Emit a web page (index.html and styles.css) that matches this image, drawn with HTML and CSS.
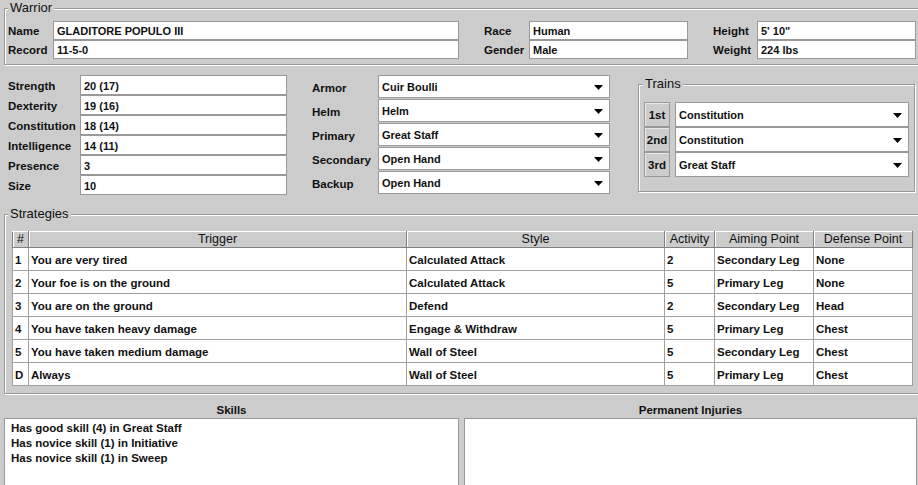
FILE: index.html
```html
<!DOCTYPE html>
<html>
<head>
<meta charset="utf-8">
<title>Warrior</title>
<link rel="stylesheet" href="styles.css">
</head>
<body>
<div class="page">
  <fieldset class="group warrior">
    <legend>Warrior</legend>
    <div class="wgrid">
      <span class="lbl">Name</span><div class="field">GLADITORE POPULO III</div>
      <span class="lbl gap">Race</span><div class="field">Human</div>
      <span class="lbl gap">Height</span><div class="field">5' 10"</div>
      <span class="lbl">Record</span><div class="field">11-5-0</div>
      <span class="lbl gap">Gender</span><div class="field">Male</div>
      <span class="lbl gap">Weight</span><div class="field">224 lbs</div>
    </div>
  </fieldset>

  <div class="mid">
    <div class="attrs">
      <span class="lbl">Strength</span><div class="field tall">20 (17)</div>
      <span class="lbl">Dexterity</span><div class="field tall">19 (16)</div>
      <span class="lbl">Constitution</span><div class="field tall">18 (14)</div>
      <span class="lbl">Intelligence</span><div class="field tall">14 (11)</div>
      <span class="lbl">Presence</span><div class="field tall">3</div>
      <span class="lbl">Size</span><div class="field tall">10</div>
    </div>

    <div class="equip">
      <span class="lbl elbl">Armor</span>
      <div class="combo"><span>Cuir Boulli</span><svg viewBox="0 0 9 5"><path d="M0 0H9L4.5 5Z"/></svg></div>
      <span class="lbl elbl">Helm</span>
      <div class="combo"><span>Helm</span><svg viewBox="0 0 9 5"><path d="M0 0H9L4.5 5Z"/></svg></div>
      <span class="lbl elbl">Primary</span>
      <div class="combo"><span>Great Staff</span><svg viewBox="0 0 9 5"><path d="M0 0H9L4.5 5Z"/></svg></div>
      <span class="lbl elbl">Secondary</span>
      <div class="combo"><span>Open Hand</span><svg viewBox="0 0 9 5"><path d="M0 0H9L4.5 5Z"/></svg></div>
      <span class="lbl elbl">Backup</span>
      <div class="combo"><span>Open Hand</span><svg viewBox="0 0 9 5"><path d="M0 0H9L4.5 5Z"/></svg></div>
    </div>

    <fieldset class="group trains">
      <legend>Trains</legend>
      <div class="tgrid">
        <div class="tbtn">1st</div>
        <div class="combo"><span>Constitution</span><svg viewBox="0 0 9 5"><path d="M0 0H9L4.5 5Z"/></svg></div>
        <div class="tbtn">2nd</div>
        <div class="combo"><span>Constitution</span><svg viewBox="0 0 9 5"><path d="M0 0H9L4.5 5Z"/></svg></div>
        <div class="tbtn">3rd</div>
        <div class="combo"><span>Great Staff</span><svg viewBox="0 0 9 5"><path d="M0 0H9L4.5 5Z"/></svg></div>
      </div>
    </fieldset>
  </div>

  <fieldset class="group strategies">
    <legend>Strategies</legend>
    <table class="strat">
      <colgroup>
        <col class="c-num"><col class="c-trig"><col class="c-style"><col class="c-act"><col class="c-aim"><col class="c-def">
      </colgroup>
      <thead>
        <tr><th>#</th><th>Trigger</th><th>Style</th><th>Activity</th><th>Aiming Point</th><th>Defense Point</th></tr>
      </thead>
      <tbody>
        <tr><td>1</td><td>You are very tired</td><td>Calculated Attack</td><td>2</td><td>Secondary Leg</td><td>None</td></tr>
        <tr><td>2</td><td>Your foe is on the ground</td><td>Calculated Attack</td><td>5</td><td>Primary Leg</td><td>None</td></tr>
        <tr><td>3</td><td>You are on the ground</td><td>Defend</td><td>2</td><td>Secondary Leg</td><td>Head</td></tr>
        <tr><td>4</td><td>You have taken heavy damage</td><td>Engage &amp; Withdraw</td><td>5</td><td>Primary Leg</td><td>Chest</td></tr>
        <tr><td>5</td><td>You have taken medium damage</td><td>Wall of Steel</td><td>5</td><td>Secondary Leg</td><td>Chest</td></tr>
        <tr><td>D</td><td>Always</td><td>Wall of Steel</td><td>5</td><td>Primary Leg</td><td>Chest</td></tr>
      </tbody>
    </table>
  </fieldset>

  <div class="bottom">
    <div class="panel skills">
      <div class="phead">Skills</div>
      <div class="pbox">
        <div>Has good skill (4) in Great Staff</div>
        <div>Has novice skill (1) in Initiative</div>
        <div>Has novice skill (1) in Sweep</div>
      </div>
    </div>
    <div class="panel injuries">
      <div class="phead">Permanent Injuries</div>
      <div class="pbox"></div>
    </div>
  </div>
</div>
</body>
</html>
```
FILE: styles.css
```css
html, body {
  margin: 0;
  padding: 0;
}
body {
  background: #cccccc;
  font-family: "Liberation Sans", Arial, sans-serif;
  color: #111;
  width: 918px;
  height: 485px;
  overflow: hidden;
}
.page {
  width: 918px;
}

/* etched group boxes */
.group {
  margin: 0;
  padding: 0;
  border: 1px solid #999;
  box-shadow: inset 1px 1px 0 #fff, 1px 1px 0 #fff;
  min-width: 0;
}
.group legend {
  padding: 0 2px;
  font-size: 13px;
  line-height: 16px;
  color: #111;
  background: #cccccc;
}

.lbl {
  font-size: 11.5px;
  font-weight: bold;
  padding-left: 3px;
  white-space: nowrap;
  display: flex;
  align-items: center;
  padding-top: 1px;
}
.lbl.gap {
  padding-left: 25px;
}
.field {
  box-sizing: border-box;
  height: 19px;
  background: #fff;
  border: 1px solid #999;
  font-size: 11px;
  font-weight: bold;
  padding: 2px 3px 0;
  line-height: 15px;
  white-space: nowrap;
  overflow: hidden;
}
.field.tall {
  height: 20px;
  padding-top: 3px;
  line-height: 15px;
}

/* warrior */
.warrior {
  margin: 0 -12px 0 4px;
  padding: 5px 0 5px 0;
}
.warrior legend {
  margin-left: 3px;
}
.wgrid {
  display: grid;
  grid-template-columns: 48px 406px 70px 159px 69px 159px;
  grid-auto-rows: 19px;
}

/* middle section */
.mid {
  display: flex;
  align-items: flex-start;
  margin-top: 10px;
  padding-left: 5px;
}
.attrs {
  display: grid;
  grid-template-columns: 75px 207px;
  grid-auto-rows: 20px;
  flex: none;
}
.equip {
  display: grid;
  grid-template-columns: 66px 232px;
  grid-auto-rows: 23px;
  row-gap: 1px;
  margin-left: 25px;
  flex: none;
}
.elbl {
  padding-left: 0;
  padding-top: 2px;
}
.combo {
  box-sizing: border-box;
  display: flex;
  align-items: center;
  justify-content: space-between;
  background: #fff;
  border: 1px solid #999;
  padding: 1px 6px 0 3px;
  font-size: 11px;
  font-weight: bold;
  white-space: nowrap;
}
.combo svg {
  width: 9px;
  height: 5px;
  flex: none;
  fill: #000;
}
.trains {
  flex: none;
  box-sizing: border-box;
  width: 277px;
  margin: 1px 0 0 28px;
  padding: 10px 5px 14px 5px;
}
.trains legend {
  margin-left: -1px;
}
.tgrid {
  display: grid;
  grid-template-columns: 26px 234px;
  grid-auto-rows: 25px;
  column-gap: 5px;
}
.tbtn {
  box-sizing: border-box;
  display: flex;
  align-items: center;
  justify-content: center;
  background: #cccccc;
  border: 1px solid #999;
  box-shadow: inset 1px 1px 0 #e8e8e8;
  font-size: 11.5px;
  font-weight: bold;
  padding-top: 1px;
}

/* strategies */
.strategies {
  margin: 11px -12px 0 4px;
  padding: 9px 0 7px 7px;
}
.strategies legend {
  margin-left: -4px;
}
.strat {
  border-collapse: collapse;
  table-layout: fixed;
  width: 900px;
  border: 1px solid #888;
}
.c-num { width: 16px; }
.c-trig { width: 378px; }
.c-style { width: 258px; }
.c-act { width: 50px; }
.c-aim { width: 99px; }
.c-def { width: 99px; }
.strat th {
  height: 15px;
  padding: 0;
  font-weight: normal;
  font-size: 12.5px;
  line-height: 15px;
  background: #cccccc;
  border: 1px solid #808080;
  border-top-color: #fff;
  box-shadow: inset 1px 0 0 #fff;
  color: #111;
  white-space: nowrap;
  overflow: hidden;
}
.strat td {
  height: 21px;
  padding: 1px 2px 0;
  border: 1px solid #a0a0a0;
  background: #fff;
  font-size: 11.5px;
  font-weight: bold;
  white-space: nowrap;
  overflow: hidden;
}

/* bottom panels */
.bottom {
  display: flex;
  gap: 5px;
  padding-left: 4px;
}
.panel {
  display: flex;
  flex-direction: column;
  flex: none;
}
.skills { width: 455px; }
.injuries { width: 453px; }
.phead {
  height: 24px;
  box-sizing: border-box;
  padding-top: 8px;
  line-height: 16px;
  text-align: center;
  font-size: 11.5px;
  font-weight: bold;
}
.pbox {
  box-sizing: border-box;
  height: 100px;
  background: #fff;
  border: 1px solid #999;
  padding: 2px 6px;
  font-size: 11.5px;
  font-weight: bold;
  line-height: 15px;
}
```
